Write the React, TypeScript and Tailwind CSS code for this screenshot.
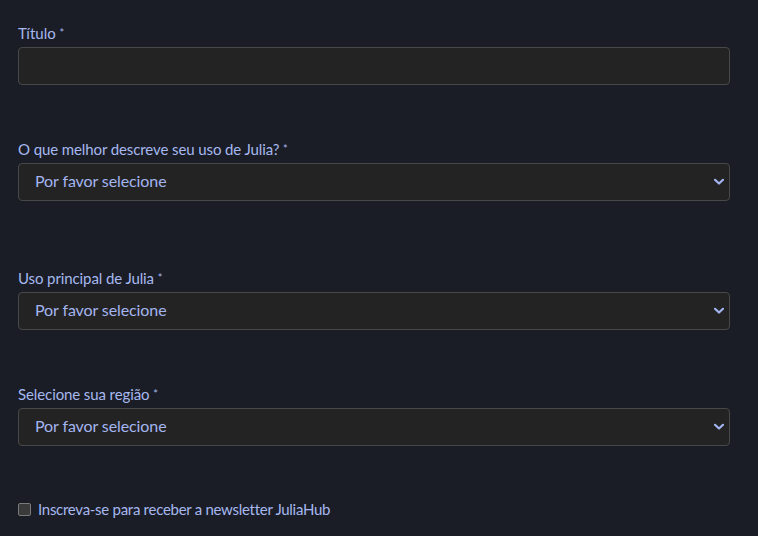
import React from "react";

const font = { fontFamily: "Lato, 'Liberation Sans', sans-serif" };

function Chevron() {
  return (
    <svg width="10" height="7" viewBox="0 0 10 7" className="absolute right-[5px] top-1/2 -translate-y-1/2 pointer-events-none">
      <path d="M1 1.2 L5 5 L9 1.2" fill="none" stroke="#a3b5f0" strokeWidth="2.2" strokeLinecap="round" strokeLinejoin="round" />
    </svg>
  );
}

function SelectField({ label, className = "" }: { label: string; className?: string }) {
  return (
    <div className={"flex flex-col " + className}>
      <label className="text-[15px] leading-[20px] text-[#a6b8ee] mb-[4px] tracking-[-0.1px]">
        {label} <span className="text-[11px] align-top">*</span>
      </label>
      <div className="relative h-[38px] w-[712px] rounded-[4px] border border-[#484848] bg-[#232323]">
        <div className="pl-[16px] h-full flex items-center pb-[2px] text-[16px] text-[#a3b5f0] tracking-[-0.1px]">Por favor selecione</div>
        <Chevron />
      </div>
    </div>
  );
}

export default function App() {
  return (
    <div className="w-[758px] h-[536px] bg-[#1a1d26] overflow-hidden pl-[18px] pt-[23px]" style={font}>
      <div className="flex flex-col">
        <label className="text-[15px] leading-[20px] text-[#a6b8ee] mb-[4px]">
          Título <span className="text-[11px] align-top">*</span>
        </label>
        <div className="h-[38px] w-[712px] rounded-[4px] border border-[#484848] bg-[#232323]" />
      </div>
      <SelectField label="O que melhor descreve seu uso de Julia?" className="mt-[54px]" />
      <SelectField label="Uso principal de Julia" className="mt-[67px]" />
      <SelectField label="Selecione sua região" className="mt-[54px]" />
      <div className="flex items-center mt-[53px] gap-[7px]">
        <div className="w-[13px] h-[13px] rounded-[2px] border border-[#7a7a7a] bg-[#3a3a3a]" />
        <span className="text-[15px] leading-[20px] text-[#a6b8ee] tracking-[-0.28px]">Inscreva-se para receber a newsletter JuliaHub</span>
      </div>
    </div>
  );
}
